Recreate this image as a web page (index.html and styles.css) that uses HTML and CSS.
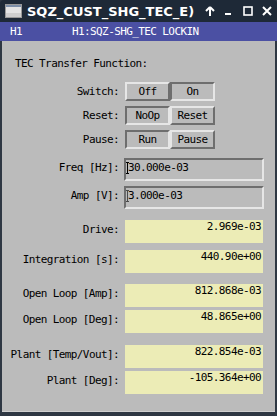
FILE: index.html
```html
<!DOCTYPE html>
<html>
<head>
    <title>SQZ_CUST_SHG_TEC_EXT</title>
    <meta name="viewport" content="width=device-width, initial-scale=1">
    <link rel="stylesheet" href="styles.css">
</head>
<body>
    <div class="window">
        <div class="titlebar">
            <svg class="app-icon" width="17" height="14" viewBox="0 0 17 14">
                <rect x="0.5" y="0.5" width="16" height="13" fill="#e4e4e4" stroke="#9a9a9a"/>
                <rect x="1" y="1" width="15" height="2" fill="#7c8ea8"/>
                <rect x="1" y="9" width="15" height="4" fill="#cfcfcf"/>
            </svg>
            <div class="title">SQZ_CUST_SHG_TEC_E)</div>
            <div class="controls">
                <svg width="10" height="10" viewBox="0 0 10 10">
                    <path d="M5 1 L1 5 M5 1 L9 5 M5 1 V10" stroke="#fff" stroke-width="2" fill="none"/>
                </svg>
                <svg width="10" height="10" viewBox="0 0 10 10">
                    <rect x="1" y="7" width="6" height="2" fill="#fff"/>
                </svg>
                <svg width="10" height="10" viewBox="0 0 10 10">
                    <rect x="1" y="1" width="8" height="8" stroke="#fff" stroke-width="1.6" fill="none"/>
                </svg>
                <svg width="10" height="10" viewBox="0 0 10 10">
                    <path d="M1 1 L9 9 M9 1 L1 9" stroke="#fff" stroke-width="2" fill="none"/>
                </svg>
            </div>
        </div>

        <div class="header">
            <span class="site">H1</span>
            <span class="device">H1:SQZ-SHG_TEC LOCKIN</span>
        </div>

        <div class="panel">
            <div class="heading">TEC Transfer Function:</div>

            <div class="row first-btn">
                <span class="label">Switch:</span>
                <div class="toggle">
                    <span class="btn">Off</span>
                    <span class="btn down">On</span>
                </div>
            </div>
            <div class="row btn-row">
                <span class="label">Reset:</span>
                <div class="toggle">
                    <span class="btn down">NoOp</span>
                    <span class="btn">Reset</span>
                </div>
            </div>
            <div class="row btn-row">
                <span class="label">Pause:</span>
                <div class="toggle">
                    <span class="btn down">Run</span>
                    <span class="btn">Pause</span>
                </div>
            </div>

            <div class="row first-entry">
                <span class="label">Freq [Hz]:</span>
                <div class="entry"><span class="caret"></span>30.000e-03</div>
            </div>
            <div class="row entry-row">
                <span class="label">Amp [V]:</span>
                <div class="entry"><span class="caret dotted"></span>3.000e-03</div>
            </div>

            <div class="row gap-big">
                <span class="label">Drive:</span>
                <div class="readback">2.969e-03</div>
            </div>
            <div class="row gap-mid">
                <span class="label">Integration [s]:</span>
                <div class="readback">440.90e+00</div>
            </div>

            <div class="row gap-big">
                <span class="label">Open Loop [Amp]:</span>
                <div class="readback">812.868e-03</div>
            </div>
            <div class="row gap-small">
                <span class="label">Open Loop [Deg]:</span>
                <div class="readback">48.865e+00</div>
            </div>

            <div class="row gap-large">
                <span class="label">Plant [Temp/Vout]:</span>
                <div class="readback">822.854e-03</div>
            </div>
            <div class="row gap-small">
                <span class="label">Plant [Deg]:</span>
                <div class="readback">-105.364e+00</div>
            </div>
        </div>
    </div>
</body>
</html>
```

FILE: styles.css
```css
body {
    margin: 0;
    padding: 0;
    background-color: #2e3743;
    font-family: "DejaVu Sans Mono", "Liberation Mono", monospace;
    font-size: 11px;
    letter-spacing: -0.6px;
    color: #000;
}
.window {
    width: 277px;
    height: 416px;
    display: flex;
    flex-direction: column;
    overflow: hidden;
}
.titlebar {
    height: 22px;
    background-color: #1e2937;
    border-radius: 4px 4px 0 0;
    display: flex;
    align-items: center;
    color: #fff;
}
.app-icon {
    margin-left: 5px;
    flex: none;
}
.title {
    margin-left: 5px;
    width: 171px;
    white-space: nowrap;
    font-family: "DejaVu Sans", sans-serif;
    font-weight: bold;
    font-size: 13px;
    letter-spacing: 0;
    flex: none;
}
.controls {
    margin-left: 7px;
    display: flex;
    gap: 9px;
    align-items: center;
}
.controls svg {
    display: block;
}
.header {
    height: 19px;
    background-color: #4b50a3;
    color: #fff;
    display: flex;
    align-items: center;
    padding-left: 10px;
}
.header .site {
    width: 62px;
}
.panel {
    flex: 1;
    background-color: #bbbbbb;
    margin: 0 2px 4px 2px;
    padding-top: 16px;
    border-bottom: 1px solid #d0d0d0;
}
.heading {
    line-height: 14px;
    padding-left: 13px;
}
.row {
    display: grid;
    grid-template-columns: 117px auto;
    column-gap: 4px;
    align-items: start;
}
.label {
    text-align: right;
    line-height: 14px;
    padding-top: 3px;
    white-space: nowrap;
}
.first-btn {
    margin-top: 11px;
}
.btn-row {
    margin-top: 5px;
}
.toggle {
    display: flex;
    margin-left: 2px;
}
.btn {
    width: 41px;
    height: 15px;
    line-height: 15px;
    text-align: center;
    border: 2px solid;
    border-color: #e6e6e6 #6e6e6e #6e6e6e #e6e6e6;
}
.btn.down {
    border-color: #6e6e6e #e6e6e6 #e6e6e6 #6e6e6e;
}
.first-entry {
    margin-top: 9px;
}
.entry-row {
    margin-top: 5px;
}
.entry {
    position: relative;
    width: 134px;
    height: 18px;
    line-height: 14px;
    padding: 1px 0 0 2px;
    border: 2px solid;
    border-color: #6e6e6e #e6e6e6 #e6e6e6 #6e6e6e;
    margin-left: 1px;
}
.caret {
    position: absolute;
    left: 0;
    top: 2px;
    width: 3px;
    height: 12px;
    border-top: 1px solid #000;
    border-bottom: 1px solid #000;
    box-sizing: border-box;
    background: linear-gradient(#000, #000) center / 1px 100% no-repeat;
}
.caret.dotted {
    opacity: 0.6;
}
.readback {
    width: 138px;
    height: 23px;
    line-height: 12px;
    padding: 1px 2px 0 2px;
    box-sizing: border-box;
    background-color: #ececb6;
    text-align: right;
    margin-left: 2px;
}
.gap-big {
    margin-top: 11px;
}
.gap-mid {
    margin-top: 7px;
}
.gap-small {
    margin-top: 3px;
}
.gap-large {
    margin-top: 12px;
}
```
